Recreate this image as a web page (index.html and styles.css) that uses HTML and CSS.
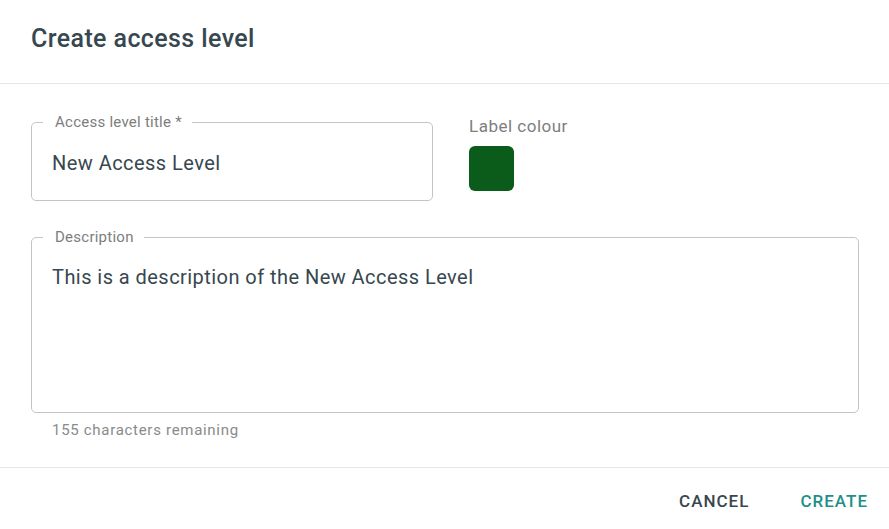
FILE: index.html
```html
<!DOCTYPE html>
<html lang="en">
<head>
<meta charset="utf-8">
<title>Create access level</title>
<link rel="stylesheet" href="styles.css">
</head>
<body>
<div class="dialog">
  <header class="dialog-header">
    <h1 class="dialog-title">Create access level</h1>
  </header>
  <main class="dialog-body">
    <div class="row">
      <fieldset class="field field-title">
        <legend class="field-label">Access level title *</legend>
        <div class="field-value">New Access Level</div>
      </fieldset>
      <div class="colour-picker">
        <div class="colour-label">Label colour</div>
        <div class="swatch"></div>
      </div>
    </div>
    <fieldset class="field field-desc">
      <legend class="field-label">Description</legend>
      <div class="field-value">This is a description of the New Access Level</div>
    </fieldset>
    <div class="helper">155 characters remaining</div>
  </main>
  <footer class="dialog-footer">
    <button class="btn btn-cancel">Cancel</button>
    <button class="btn btn-create">Create</button>
  </footer>
</div>
</body>
</html>
```

FILE: styles.css
```css
* { box-sizing: border-box; }
html, body { margin: 0; padding: 0; background: #fff; }
body { font-family: Roboto, "Noto Sans", "Liberation Sans", sans-serif; color: #37474f; }

.dialog { width: 889px; height: 529px; display: flex; flex-direction: column; }

.dialog-header {
  height: 84px;
  padding: 23px 31px 0;
  border-bottom: 1px solid #e6e6e6;
}
.dialog-title {
  margin: 0;
  font-size: 25px;
  line-height: 32px;
  font-weight: 500;
  letter-spacing: 0.4px;
  color: #37474f;
}

.dialog-body {
  padding: 30px 30px 0 31px;
  display: flex;
  flex-direction: column;
}

.row { display: flex; align-items: flex-start; gap: 36px; }

.field {
  margin: 0;
  padding: 0 20px;
  border: 1px solid #c4c4c4;
  border-radius: 5px;
  min-width: 0;
}
.field-label {
  margin-left: -9px;
  padding: 0 10px 0 12px;
  font-size: 15px;
  line-height: 16px;
  letter-spacing: 0.25px;
  color: #7d7d7d;
}
.field-value {
  font-size: 20px;
  line-height: 24px;
  letter-spacing: 0.45px;
  color: #37474f;
}

.field-title { width: 402px; height: 87px; }
.field-title .field-value { padding-top: 21px; }

.colour-picker { padding-top: 2px; }
.colour-label {
  font-size: 17px;
  line-height: 20px;
  letter-spacing: 0.5px;
  color: #7d7d7d;
}
.swatch {
  margin-top: 10px;
  width: 45px;
  height: 45px;
  border-radius: 6px;
  background: #0b5c1b;
}

.field-desc { margin-top: 28px; width: 828px; height: 184px; }
.field-desc .field-value { padding-top: 20px; }

.helper {
  margin-top: 7px;
  padding-left: 21px;
  font-size: 15px;
  line-height: 20px;
  letter-spacing: 0.7px;
  color: #8a8a8a;
}

.dialog-footer {
  margin-top: 27px;
  border-top: 1px solid #e6e6e6;
  padding: 23px 21px 0 0;
  display: flex;
  justify-content: flex-end;
  gap: 51px;
}
.btn {
  border: 0;
  background: none;
  padding: 0;
  font-family: inherit;
  font-size: 17px;
  line-height: 20px;
  font-weight: 500;
  letter-spacing: 1px;
  text-transform: uppercase;
  cursor: pointer;
}
.btn-cancel { color: #37474f; }
.btn-create { color: #1f8f88; }
```
